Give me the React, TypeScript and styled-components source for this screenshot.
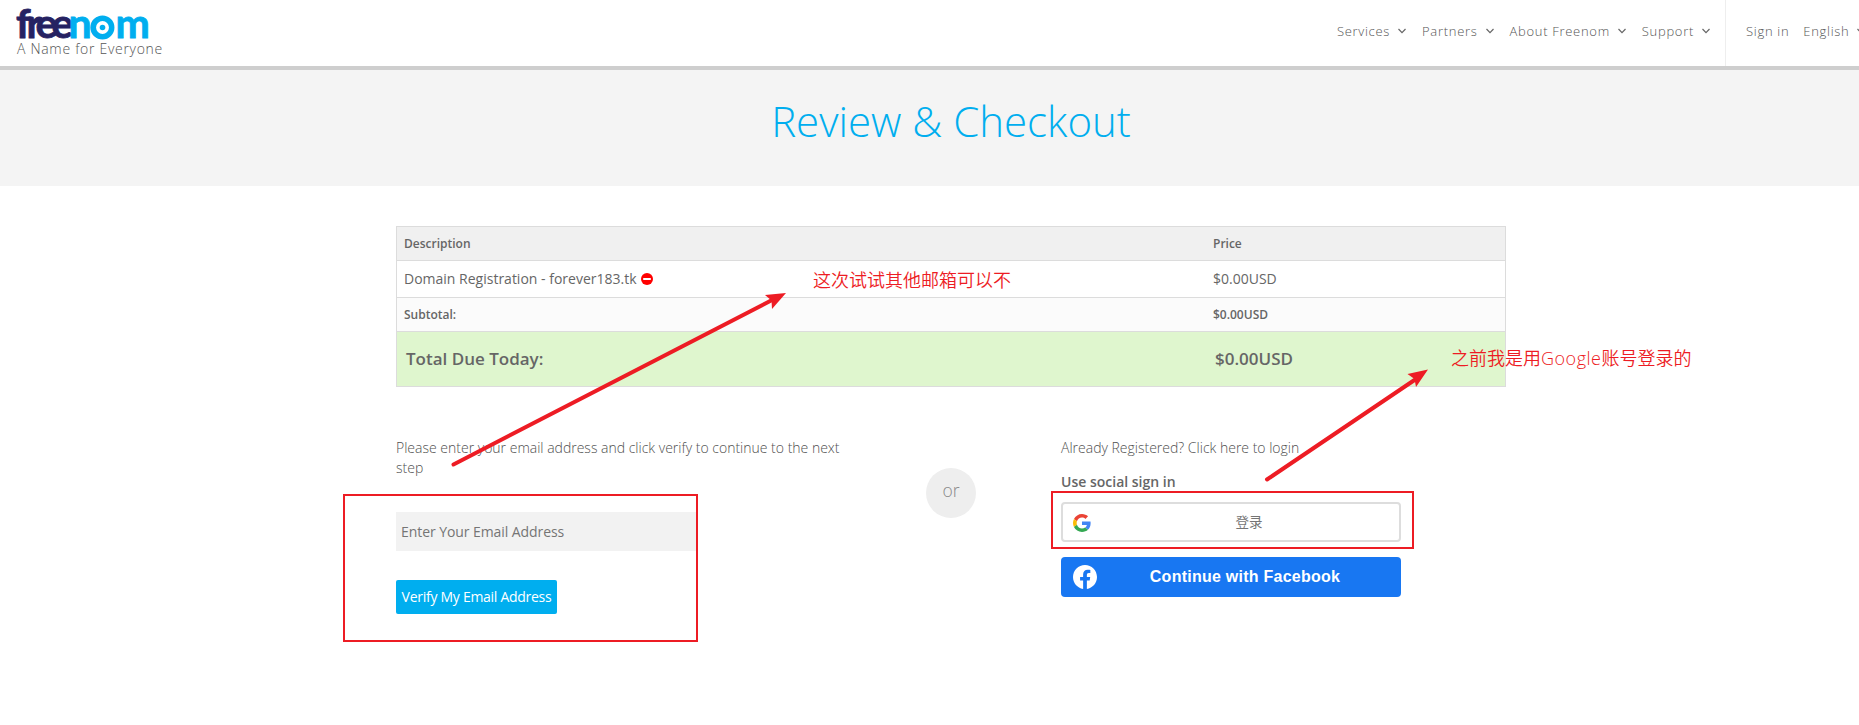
import styled, { createGlobalStyle } from "styled-components";

export default function App() {
  const menu = ["Services", "Partners", "About Freenom", "Support"];
  const rows = [
    { label: "Subtotal:", price: "$0.00USD", kind: "subtotal" as const },
    { label: "Total Due Today:", price: "$0.00USD", kind: "total" as const },
  ];

  return (
    <Page>
      <GlobalStyle />
      <Header>
        <Brand>
          <Logo />
          <Tagline>A Name for Everyone</Tagline>
        </Brand>
        <Menu>
          {menu.map((item) => (
            <MenuItem key={item}>
              {item}
              <Chevron />
            </MenuItem>
          ))}
        </Menu>
        <Account>
          <MenuItem>Sign in</MenuItem>
          <MenuItem>
            English
            <Chevron />
          </MenuItem>
        </Account>
      </Header>
      <Banner>
        <h1>Review &amp; Checkout</h1>
      </Banner>
      <Container>
        <Table>
          <Row $kind="head">
            <span>Description</span>
            <span>Price</span>
          </Row>
          <Row $kind="item">
            <span>
              Domain Registration - forever183.tk
              <RemoveIcon />
            </span>
            <span>$0.00USD</span>
          </Row>
          {rows.map((row) => (
            <Row $kind={row.kind} key={row.kind}>
              <span>{row.label}</span>
              <span>{row.price}</span>
            </Row>
          ))}
        </Table>
        <Options>
          <EmailForm>
            <Note>
              Please enter your email address and click verify to continue to
              the next step
            </Note>
            <EmailInput placeholder="Enter Your Email Address" />
            <VerifyButton>Verify My Email Address</VerifyButton>
          </EmailForm>
          <OrBadge>or</OrBadge>
          <SocialLogin>
            <Note>Already Registered? Click here to login</Note>
            <SocialTitle>Use social sign in</SocialTitle>
            <GoogleButton>
              <GoogleIcon />
              <span>登录</span>
            </GoogleButton>
            <FacebookButton>
              <FacebookIcon />
              <span>Continue with Facebook</span>
            </FacebookButton>
          </SocialLogin>
        </Options>
      </Container>
      <Markup />
      <Remark $x={813} $y={266}>
        这次试试其他邮箱可以不
      </Remark>
      <Remark $x={1451} $y={344}>
        之前我是用<em>Google</em>账号登录的
      </Remark>
    </Page>
  );
}

function Logo() {
  return (
    <LogoSvg width="134" height="34" viewBox="0 0 134 34">
      <text x="0 10.5 19.5 35.5" y="32" fill="#262262" stroke="#262262">
        free
      </text>
      <text x="52.5 73.5 99.5" y="32" fill="#00aeef" stroke="#00aeef">
        nom
      </text>
      <circle cx="86.5" cy="21.5" r="9.2" fill="#fff" stroke="#00aeef" />
      <circle cx="86.5" cy="21.5" r="2.8" fill="#00aeef" />
    </LogoSvg>
  );
}

function Chevron() {
  return (
    <ChevronSvg width="8" height="6" viewBox="0 0 8 6">
      <path d="M0.5 1l3.5 3.6L7.5 1" />
    </ChevronSvg>
  );
}

function RemoveIcon() {
  return (
    <RemoveSvg width="12" height="12" viewBox="0 0 12 12">
      <circle cx="6" cy="6" r="6" fill="#f00" />
      <rect x="2.2" y="5" width="7.6" height="2" fill="#fff" />
    </RemoveSvg>
  );
}

function GoogleIcon() {
  return (
    <svg width="18" height="18" viewBox="0 0 48 48">
      <path
        fill="#EA4335"
        d="M24 9.5c3.54 0 6.71 1.22 9.21 3.6l6.85-6.85C35.9 2.38 30.47 0 24 0 14.62 0 6.51 5.38 2.56 13.22l7.98 6.19C12.43 13.72 17.74 9.5 24 9.5z"
      />
      <path
        fill="#4285F4"
        d="M46.98 24.55c0-1.57-.15-3.09-.38-4.55H24v9.02h12.94c-.58 2.96-2.26 5.48-4.78 7.18l7.73 6c4.51-4.18 7.09-10.36 7.09-17.65z"
      />
      <path
        fill="#FBBC05"
        d="M10.53 28.59c-.48-1.45-.76-2.99-.76-4.59s.27-3.14.76-4.59l-7.98-6.19C.92 16.46 0 20.12 0 24c0 3.88.92 7.54 2.56 10.78l7.97-6.19z"
      />
      <path
        fill="#34A853"
        d="M24 48c6.48 0 11.93-2.13 15.89-5.81l-7.73-6c-2.15 1.45-4.92 2.3-8.16 2.3-6.26 0-11.57-4.22-13.47-9.91l-7.98 6.19C6.51 42.62 14.62 48 24 48z"
      />
    </svg>
  );
}

function FacebookIcon() {
  return (
    <svg width="24" height="24" viewBox="0 0 24 24">
      <path
        fill="#fff"
        d="M24 12.07C24 5.41 18.63 0 12 0S0 5.4 0 12.07C0 18.1 4.39 23.1 10.13 24v-8.44H7.08v-3.49h3.04V9.41c0-3.02 1.8-4.7 4.54-4.7 1.31 0 2.68.24 2.68.24v2.97h-1.5c-1.5 0-1.96.93-1.96 1.89v2.26h3.32l-.53 3.5h-2.8V24C19.62 23.1 24 18.1 24 12.07"
      />
    </svg>
  );
}

function Markup() {
  return (
    <MarkupSvg width="1859" height="725" viewBox="0 0 1859 725">
      <rect x="344" y="495" width="353" height="146" />
      <rect x="1052" y="492" width="361" height="56" />
      <path className="line" d="M453.5 464.5L774 299" />
      <path className="line" d="M1267 479.5L1416 379" />
      <path className="head" d="M786 293L765 295L771.5 300.5L772 309Z" />
      <path className="head" d="M1428 369.500L1407.5 374L1414.5 379L1416 387Z" />
    </MarkupSvg>
  );
}

const GlobalStyle = createGlobalStyle`
  * {
    box-sizing: border-box;
  }
  body {
    margin: 0;
    background: #fff;
    color: #666;
    font-family: "Open Sans", "Noto Sans CJK SC", sans-serif;
    font-size: 14px;
  }
`;

const Page = styled.main`
  position: relative;
  width: 1859px;
  height: 725px;
  overflow: hidden;
`;

const Header = styled.header`
  display: flex;
  height: 70px;
  border-bottom: 4px solid #cecece;
`;

const Brand = styled.div`
  margin-right: auto;
  padding: 6px 0 0 16px;
`;

const LogoSvg = styled.svg`
  display: block;
  overflow: visible;
  font-family: Lato, sans-serif;
  font-size: 41px;
  font-weight: 700;
  text {
    stroke-width: 0.8;
  }
  circle {
    stroke-width: 5.5;
  }
`;

const Tagline = styled.div`
  padding-left: 1px;
  color: #555;
  font-size: 14px;
  font-weight: 300;
  line-height: 18px;
  letter-spacing: 0.7px;
`;

const Menu = styled.nav`
  display: flex;
  gap: 16px;
  padding-right: 15px;
`;

const Account = styled(Menu)`
  flex: none;
  gap: 14px;
  width: 134px;
  padding: 0 0 0 20px;
  border-left: 1px solid #eee;
`;

const MenuItem = styled.a`
  display: flex;
  align-items: center;
  height: 62px;
  color: #555;
  font-size: 13px;
  letter-spacing: 0.7px;
  font-weight: 300;
  white-space: nowrap;
`;

const ChevronSvg = styled.svg`
  flex: none;
  margin-left: 8px;
  fill: none;
  stroke: #666;
  stroke-width: 1.2;
`;

const Banner = styled.section`
  height: 116px;
  background: #f4f4f4;
  text-align: center;
  h1 {
    margin: 0;
    padding-left: 43px;
    color: #00aeef;
    font-size: 42px;
    font-weight: 300;
    line-height: 102px;
  }
`;

const Container = styled.div`
  width: 1110px;
  margin: 40px 0 0 396px;
`;

const Table = styled.div`
  border: 1px solid #dcdcdc;
`;

const rowStyles = {
  head: "height: 33px; background: #f0f0f0; font-size: 12px; font-weight: 600;",
  item: "height: 37px; padding-bottom: 1px; font-size: 14px;",
  subtotal: "height: 34px; background: #fbfbfb; font-size: 12px; font-weight: 600;",
  total: "height: 55px; background: #dff6ce; font-size: 17px; font-weight: 600; padding: 0 0 1px 9px;",
};

const Row = styled.div<{ $kind: keyof typeof rowStyles }>`
  display: grid;
  grid-template-columns: 809px 1fr;
  align-items: center;
  padding-left: 7px;
  ${(props) => rowStyles[props.$kind]}
  & + & {
    border-top: 1px solid #dcdcdc;
  }
`;

const RemoveSvg = styled.svg`
  margin-left: 4px;
  vertical-align: -1px;
`;

const Options = styled.div`
  display: flex;
  margin-top: 51px;
`;

const EmailForm = styled.div`
  display: flex;
  flex-direction: column;
  align-items: flex-start;
  width: 530px;
`;

const Note = styled.p`
  width: 450px;
  margin: 0;
  color: #505050;
  font-weight: 300;
  line-height: 20px;
`;

const EmailInput = styled.input`
  width: 301px;
  height: 39px;
  margin-top: 34px;
  padding: 0 5px;
  border: 0;
  background: #f2f2f2;
  font: inherit;
  letter-spacing: -0.07px;
  &::placeholder {
    color: #757575;
  }
`;

const VerifyButton = styled.button`
  width: 161px;
  height: 34px;
  margin-top: 29px;
  padding: 0 0 1px;
  border: 0;
  border-radius: 2px;
  background: #00aeef;
  color: #fff;
  font: inherit;
  letter-spacing: -0.28px;
`;

const OrBadge = styled.div`
  width: 50px;
  height: 50px;
  margin-top: 30px;
  border-radius: 50%;
  background: #eee;
  color: #888;
  font-size: 17.5px;
  font-weight: 300;
  line-height: 44px;
  text-align: center;
`;

const SocialLogin = styled.div`
  width: 340px;
  margin-left: 85px;
`;

const SocialTitle = styled.h4`
  margin: 14px 0 10px;
  font-size: 14px;
  font-weight: 600;
  line-height: 20px;
`;

const SocialButton = styled.button`
  display: flex;
  align-items: center;
  width: 100%;
  height: 40px;
  padding: 0 10px;
  border-radius: 4px;
  span {
    flex: 1;
    text-align: center;
  }
`;

const GoogleButton = styled(SocialButton)`
  border: 2px solid #ddd;
  background: #fff;
  color: #757575;
  font-family: "Noto Sans CJK SC", sans-serif;
  font-size: 13.5px;
  svg {
    position: relative;
    top: 1px;
  }
  span {
    padding: 0 0 2px 18px;
  }
`;

const FacebookButton = styled(SocialButton)`
  margin-top: 15px;
  padding: 0 12px;
  border: 0;
  background: #1877f2;
  color: #fff;
  font-family: "Liberation Sans", Arial, sans-serif;
  font-size: 16px;
  font-weight: 700;
  letter-spacing: 0.25px;
  span {
    padding-left: 4px;
  }
`;

const MarkupSvg = styled.svg`
  position: absolute;
  top: 0;
  left: 0;
  fill: none;
  stroke: #ed1c24;
  stroke-width: 2;
  pointer-events: none;
  .line {
    stroke-width: 4;
    stroke-linecap: round;
  }
  .head {
    fill: #ed1c24;
    stroke: none;
  }
`;

const Remark = styled.div<{ $x: number; $y: number }>`
  position: absolute;
  left: ${(props) => props.$x}px;
  top: ${(props) => props.$y}px;
  color: #ed1c24;
  font-family: "Noto Sans CJK SC", sans-serif;
  font-size: 18px;
  font-weight: 350;
  line-height: 26px;
  white-space: nowrap;
  em {
    font-family: "Open Sans", sans-serif;
    font-style: normal;
    letter-spacing: 0.5px;
  }
`;
